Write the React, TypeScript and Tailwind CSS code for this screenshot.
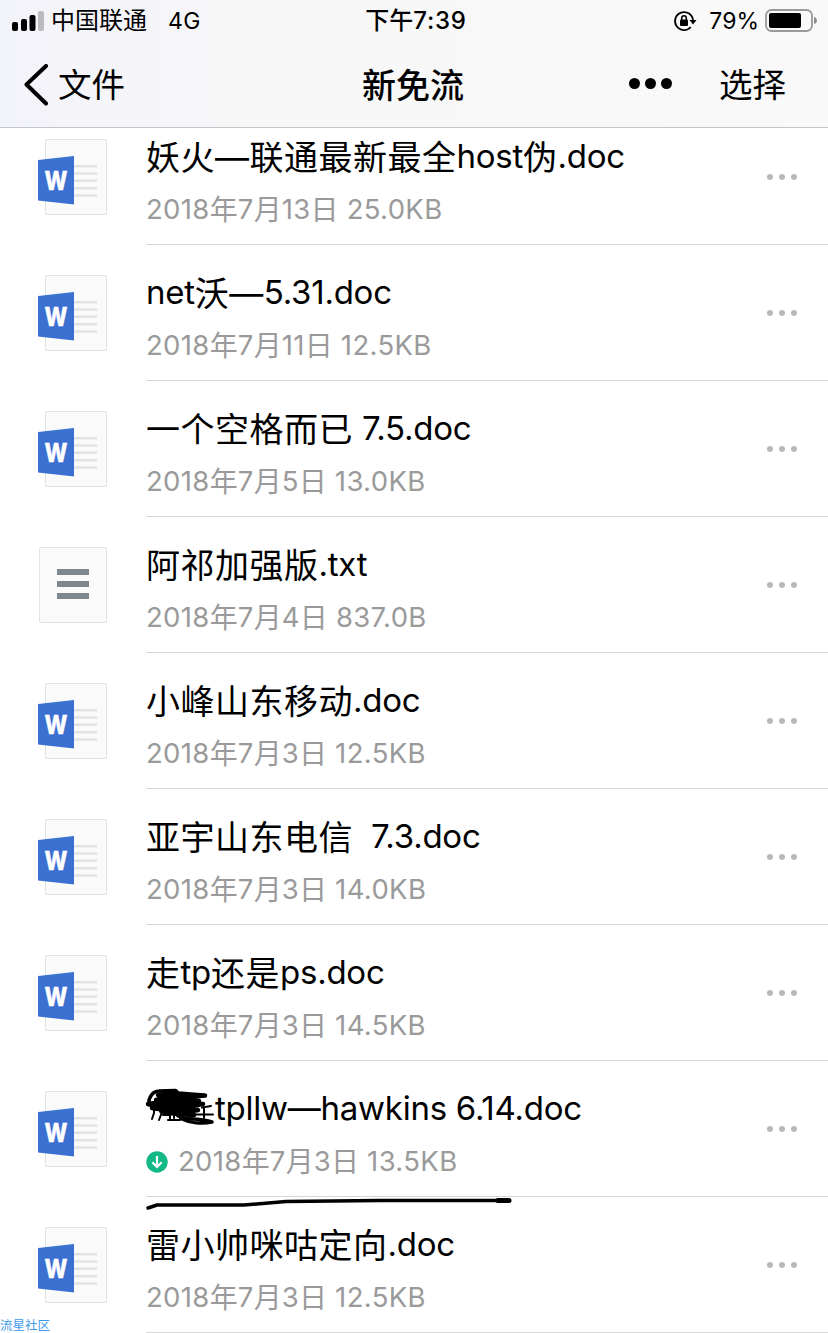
import * as React from "react";

interface FileItem {
  name: string;
  meta: string;
  type: "doc" | "txt";
  downloaded?: boolean;
  scribbled?: boolean;
}

const files: FileItem[] = [
  { name: "妖火—联通最新最全host伪.doc", meta: "2018年7月13日 25.0KB", type: "doc" },
  { name: "net沃—5.31.doc", meta: "2018年7月11日 12.5KB", type: "doc" },
  { name: "一个空格而已 7.5.doc", meta: "2018年7月5日 13.0KB", type: "doc" },
  { name: "阿祁加强版.txt", meta: "2018年7月4日 837.0B", type: "txt" },
  { name: "小峰山东移动.doc", meta: "2018年7月3日 12.5KB", type: "doc" },
  { name: "亚宇山东电信  7.3.doc", meta: "2018年7月3日 14.0KB", type: "doc" },
  { name: "走tp还是ps.doc", meta: "2018年7月3日 14.5KB", type: "doc" },
  { name: "tpllw—hawkins 6.14.doc", meta: "2018年7月3日 13.5KB", type: "doc", downloaded: true, scribbled: true },
  { name: "雷小帅咪咕定向.doc", meta: "2018年7月3日 12.5KB", type: "doc" },
];

// Splits a string into Chinese and Latin runs so each gets its own tracking.
// A dash right after a Chinese character is set with that run.
const MixedText: React.FC<{ text: string; cjk: string; latin: string }> = ({ text, cjk, latin }) => {
  const runs = text.match(/[\u4e00-\u9fff]+(?:—[\u4e00-\u9fff]*)?|[^\u4e00-\u9fff]+/g) ?? [];
  return (
    <>
      {runs.map((run, i) => (
        <span key={i} className={/[\u4e00-\u9fff]/.test(run) ? cjk : latin}>
          {run}
        </span>
      ))}
    </>
  );
};

const DocIcon = () => (
  <svg className="block" width="72" height="80" viewBox="0 0 72 80">
    <rect x="9.5" y="3.5" width="61" height="75" rx="1.5" fill="#fafafa" stroke="#e2e2e3" />
    <path d="M37 30.2h24M37 37.5h24M37 44.8h24M37 52.2h24M37 59.5h24" stroke="#e3e3e5" strokeWidth="2.4" />
    <path d="M2 24 38 20V68.500L2 64.500Z" fill="#3b70d0" />
    <text x="8.500" y="54" fontSize="26" fontWeight="800" textLength="23" lengthAdjust="spacingAndGlyphs" fill="#fff" stroke="#fff" strokeWidth="0.4" fontFamily="Inter, sans-serif">
      W
    </text>
  </svg>
);

const TxtIcon = () => (
  <svg className="block" width="72" height="80" viewBox="0 0 72 80">
    <rect x="3.5" y="3.5" width="67" height="75" rx="1.5" fill="#fafafa" stroke="#e2e2e3" />
    <path d="M21 28h32M21 40h32M21 52h32" stroke="#7c8790" strokeWidth="6" />
  </svg>
);

const DownloadedBadge = () => (
  <svg className="mr-[10px] shrink-0" width="22" height="22" viewBox="0 0 22 22">
    <circle cx="11" cy="11" r="10.7" fill="#12b886" />
    <path d="M11 5v11M6.3 11.2 11 16l4.7-4.8" fill="none" stroke="#fff" strokeWidth="2.2" />
  </svg>
);

const Scribble = () => (
  <svg className="block h-[50px] w-[69px] shrink-0 overflow-visible" viewBox="0 0 69 50" fill="none" stroke="#000" strokeLinecap="round" strokeLinejoin="round">
    <path d="M3 21V16C5 10 8 7 13 7L29 6.500C32 7 31 10 29 11" strokeWidth="3.500" />
    <path d="M12 11C24 8 38 10 59 11.500C46 13 24 12 10 16C28 14 46 15 53 17C38 19 18 17 2 20C18 22 42 18 57 20C42 24 20 22 6 24C20 27 42 24 52 26C38 29 22 27 15 27C28 31 38 30 48 31" strokeWidth="4.500" />
    <path d="M32 32C42 36 52 34 66 38C56 40 44 39 36 35" strokeWidth="3.500" />
    <path d="M8 26v3l-2 6M16 28l-3 8M17 31h7v5M22 36h12v-5M28 28v6M56 23.500l9-1.500M46 30.500h21M58 24v10" strokeWidth="2" />
  </svg>
);

const FileRow: React.FC<{ file: FileItem }> = ({ file }) => (
  <div className="flex h-[136px] shrink-0 pl-9">
    <div className="w-[110px] shrink-0 pt-[27px]">{file.type === "doc" ? <DocIcon /> : <TxtIcon />}</div>
    <div className="flex flex-1 border-b border-[#d6d6d8]">
      <div className="flex-1 pt-[23px]">
        <div className="flex h-[50px] items-center whitespace-pre text-[33px] text-black">
          {file.scribbled && <Scribble />}
          <MixedText text={file.name} cjk="text-[34px] tracking-[0.5px]" latin="tracking-[-0.25px]" />
        </div>
        <div className="mt-[3px] flex h-[50px] items-center whitespace-pre text-[27.500px] text-[#9a9a9a]">
          {file.downloaded && <DownloadedBadge />}
          <MixedText text={file.meta} cjk="text-[28px]" latin="tracking-[0.35px]" />
        </div>
      </div>
      <div className="flex w-[61px] gap-1.5 pt-[65px]">
        <span className="size-1.5 rounded-full bg-[#b9b9b9]" />
        <span className="size-1.5 rounded-full bg-[#b9b9b9]" />
        <span className="size-1.5 rounded-full bg-[#b9b9b9]" />
      </div>
    </div>
  </div>
);

const StatusBar = () => (
  <div className="grid h-[42px] grid-cols-[1fr_auto_1fr] items-center text-[23px] leading-none">
    <div className="flex items-center pl-3">
      <svg width="33" height="20" viewBox="0 0 33 20">
        <rect x="0" y="11" width="6" height="9" rx="2" />
        <rect x="9" y="8" width="6" height="12" rx="2" />
        <rect x="17.500" y="4" width="6" height="16" rx="2" />
        <rect x="26" y="0" width="6" height="20" rx="2" fill="#b9bbbd" />
      </svg>
      <span className="ml-1.5 text-[24px]">中国联通</span>
      <span className="ml-[21px] tracking-[0.5px]">4G</span>
    </div>
    <div className="flex items-center pl-1 font-medium">
      <span className="text-[24px]">下午</span>
      <span className="text-[24px] tracking-[0.75px]">7:39</span>
    </div>
    <div className="flex items-center justify-end pr-2.5">
      <svg width="24" height="22" viewBox="0 0 24 22" fill="none" stroke="#000" strokeWidth="1.8">
        <path d="M20 10.500A9 9 0 1 0 17.800 17" />
        <path d="M16.500 10h7l-3.500 4.500z" fill="#000" stroke="none" />
        <rect x="7" y="9.500" width="8" height="6.500" rx="1" fill="#000" stroke="none" />
        <path d="M8.700 10V8a2.300 2.300 0 0 1 4.600 0v2" strokeWidth="1.5" />
      </svg>
      <span className="ml-3">79%</span>
      <svg className="ml-1.5" width="53" height="24" viewBox="0 0 53 24">
        <rect x="1" y="1" width="46" height="21" rx="5.500" fill="none" stroke="#9a9a9a" strokeWidth="1.800" />
        <rect x="4" y="4" width="32" height="15" rx="2" />
        <path d="M49 8c4 1 4 6 0 7z" fill="#8e8e8e" />
      </svg>
    </div>
  </div>
);

const NavBar = () => (
  <div className="grid h-[85px] grid-cols-[1fr_auto_1fr] items-center text-[33.500px]">
    <div className="flex items-center pl-6">
      <svg width="26" height="42" viewBox="0 0 26 42" fill="none" stroke="#000" strokeWidth="4" strokeLinecap="round" strokeLinejoin="round">
        <path d="M22 2 2.500 20.500 22 39.500" />
      </svg>
      <span className="ml-2 pt-0.5">文件</span>
    </div>
    <div className="-ml-[2px] pt-0.5 text-[34px] font-medium">新免流</div>
    <div className="flex items-center justify-end pr-[42px]">
      <div className="mb-[3px] mr-[47px] flex gap-[5px]">
        <span className="size-[11px] rounded-full bg-black" />
        <span className="size-[11px] rounded-full bg-black" />
        <span className="size-[11px] rounded-full bg-black" />
      </div>
      <span className="pt-0.5">选择</span>
    </div>
  </div>
);

export default function App() {
  return (
    <div className="relative flex h-[1333px] w-[828px] flex-col overflow-hidden bg-white font-['Inter','Noto_Sans_CJK_SC',sans-serif] text-black">
      <header className="relative z-10 h-32 shrink-0 border-b border-[#c5c6c9] bg-linear-to-r from-[#f3f4fa] via-[#f7f7f8] via-30% to-[#f9f9f9]">
        <StatusBar />
        <NavBar />
      </header>
      {/* The first row is scrolled partly behind the header */}
      <main className="-mt-[19px] flex flex-col">
        {files.map((file) => (
          <FileRow key={file.name} file={file} />
        ))}
      </main>
      {/* Hand-drawn underline */}
      <svg className="absolute left-[140px] top-[1190px]" width="380" height="24" viewBox="0 0 380 24" fill="none" stroke="#000" strokeLinecap="round" strokeLinejoin="round">
        <path d="M8 18 17 15H104L146 11.500 240 10.500H369" strokeWidth="3.500" />
        <path d="M358 10.500H369" strokeWidth="5" />
      </svg>
      <span className="absolute bottom-0 left-0 text-[12.500px] leading-[14px] text-[#3d9bea]">流星社区</span>
    </div>
  );
}
